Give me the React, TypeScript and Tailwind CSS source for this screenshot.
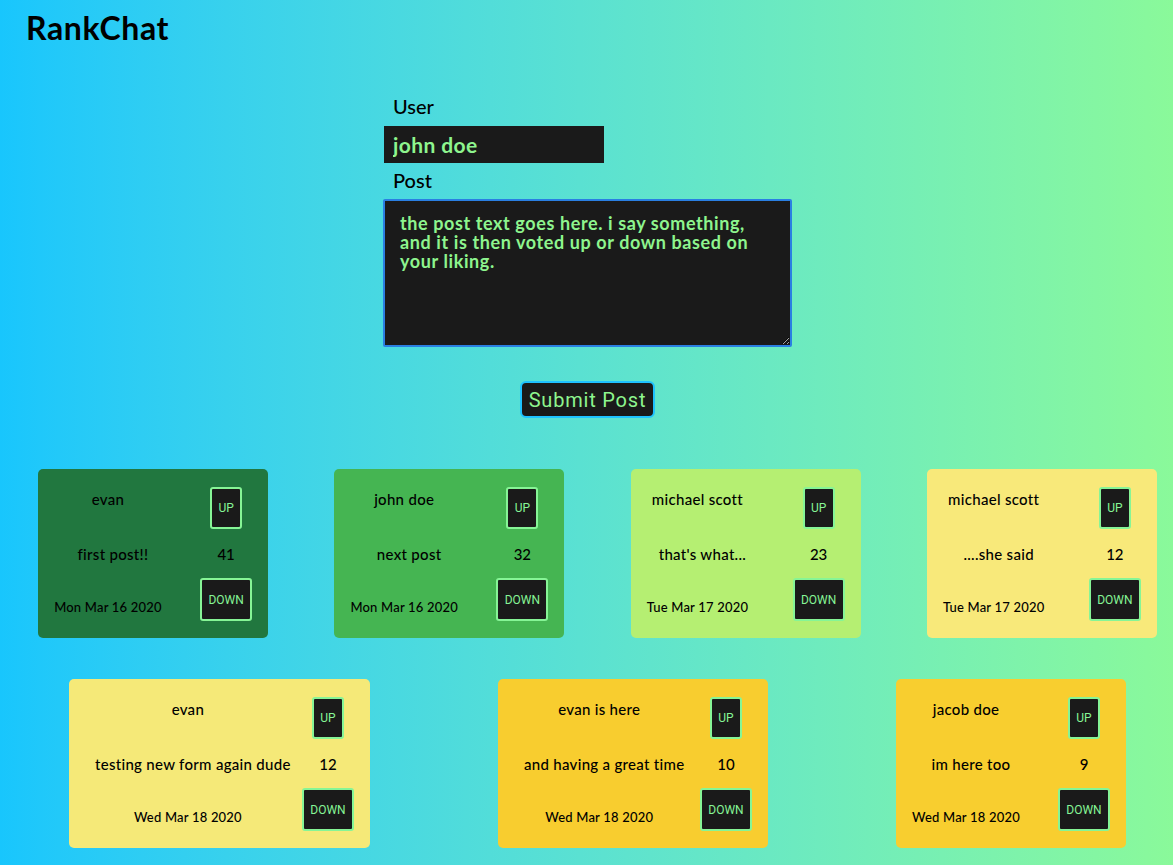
import React from "react";

const posts = [
  { user: "evan", text: "first post!!", score: 41, date: "Mon Mar 16 2020", card: "w-[230px] bg-[#21773f]" },
  { user: "john doe", text: "next post", score: 32, date: "Mon Mar 16 2020", card: "w-[230px] bg-[#45b552]" },
  { user: "michael scott", text: "that's what...", score: 23, date: "Tue Mar 17 2020", card: "w-[230px] bg-[#b5ef72]" },
  { user: "michael scott", text: "....she said", score: 12, date: "Tue Mar 17 2020", card: "w-[230px] bg-[#f8e97a]" },
  { user: "evan", text: "testing new form again dude", score: 12, date: "Wed Mar 18 2020", card: "w-[301px] bg-[#f5e978]" },
  { user: "evan is here", text: "and having a great time", score: 10, date: "Wed Mar 18 2020", card: "w-[270px] bg-[#f8cd2f]" },
  { user: "jacob doe", text: "im here too", score: 9, date: "Wed Mar 18 2020", card: "w-[230px] bg-[#f8ce2f]" },
];

const PostCard = ({ post }: { post: (typeof posts)[number] }) => {
  return (
    <div className={`${post.card} h-[169px] rounded-[5px] flex justify-between px-4 pt-[18px] pb-[17px] text-black`}>
      <div className="h-[134px] flex flex-col items-center justify-between pt-[2px] pb-[5px]">
        <p className="text-[15px] leading-[20px] font-medium tracking-[0.3px]">{post.user}</p>
        <p className="text-[15px] leading-[20px] font-medium tracking-[0.3px] pl-[10px]">{post.text}</p>
        <p className="text-[13px] leading-[18px] font-medium tracking-[0.2px]">{post.date}</p>
      </div>
      <div className="w-[52px] h-[134px] flex flex-col items-center justify-between">
        <button className="w-[32px] h-[42px] bg-[#1a1a1a] border-2 border-[#86f596] rounded-[3px] text-[#86f596] text-[12px] font-['Roboto',sans-serif]">
          UP
        </button>
        <p className="text-[15px] leading-[18px] font-medium">{post.score}</p>
        <button className="w-[52px] h-[43px] bg-[#1a1a1a] border-2 border-[#86f596] rounded-[3px] text-[#86f596] text-[12px] font-['Roboto',sans-serif]">
          DOWN
        </button>
      </div>
    </div>
  );
};

const App = () => {
  return (
    <div className="w-[1173px] h-[865px] overflow-hidden bg-gradient-to-r from-[#18c6fd] to-[#8af99a] font-['Lato',sans-serif]">
      <header className="px-[26px] pt-[8px]">
        <h1 className="text-[32px] leading-[40px] font-bold tracking-[0.6px] text-black">RankChat</h1>
      </header>

      <form className="w-[409px] ml-[383px] mt-[46px] flex flex-col items-start" onSubmit={(e) => e.preventDefault()}>
        <label className="pl-[10px] text-[20px] leading-[24px] font-medium text-black">User</label>
        <input
          defaultValue="john doe"
          className="mt-[8px] ml-[1px] w-[220px] h-[37px] bg-[#1a1a1a] px-[9px] text-[21px] font-bold tracking-[0.4px] text-[#8ef58e] outline-none"
        />
        <label className="mt-[5px] pl-[10px] text-[20px] leading-[24px] font-medium text-black">Post</label>
        <textarea
          defaultValue="the post text goes here. i say something, and it is then voted up or down based on your liking."
          className="mt-[7px] w-[409px] h-[148px] bg-[#1a1a1a] border-2 border-[#2a7fe2] rounded-[2px] pl-[15px] pr-[40px] pt-[13px] text-[18px] leading-[19px] font-bold tracking-[0.6px] text-[#8ef58e] outline-none"
        />
        <button className="self-center mt-[34px] h-[37px] px-[7px] bg-[#1a1a1a] border-2 border-[#1ec2ff] rounded-md text-[20px] tracking-[0.8px] text-[#8ef58e] font-['Roboto',sans-serif]">
          Submit Post
        </button>
      </form>

      <div className="ml-[5px] w-[1185px] mt-[51px] flex flex-wrap justify-around gap-y-[41px]">
        {posts.map((post, i) => (
          <PostCard key={i} post={post} />
        ))}
      </div>
    </div>
  );
};

export default App;
